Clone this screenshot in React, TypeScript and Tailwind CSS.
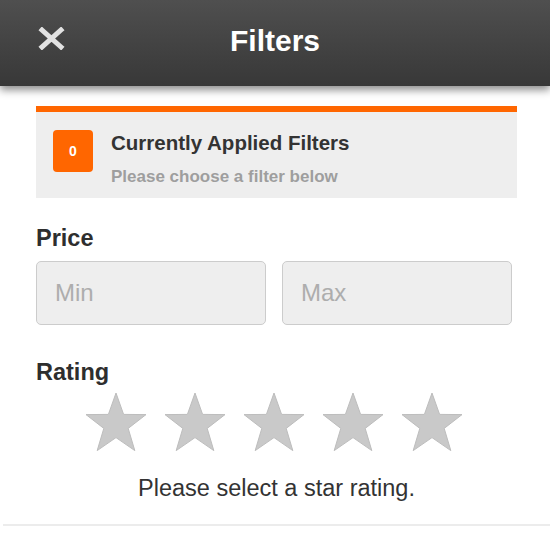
import { useState } from "react";

function Star( { active } : { active: boolean } ) {
   return (
      <svg width="62" height="60" viewBox="0 0 62 60">
         <path
            d="M31 1 L38.6 22.4 L61 22.6 L43.2 36.4 L49.8 58.6 L31 45.6 L12.2 58.6 L18.8 36.4 L1 22.6 L23.4 22.4 Z"
            fill={active ? "#ff6600" : "#c9c9c9"}
            stroke="#bdbdbd"
            strokeWidth="1"
            strokeLinejoin="round"
         />
      </svg>
   );
}

export default function App() {
   const [rating, setRating] = useState( 0 );

   return (
      <div className="w-[550px] h-[550px] bg-white overflow-hidden font-['Liberation_Sans',Arial,sans-serif]">
         <header className="relative h-[86px] flex items-center justify-center bg-gradient-to-b from-[#4f4f4f] to-[#383838] shadow-[0_4px_8px_rgba(0,0,0,0.45)]">
            <button className="absolute left-[38px] top-[27px]">
               <svg width="27" height="23" viewBox="0 0 27 23">
                  <path d="M4 3 L23 20 M23 3 L4 20" stroke="#e2e2e2" strokeWidth="5" strokeLinecap="square" />
               </svg>
            </button>
            <h1 className="text-white text-[30px] font-bold -mt-[6px]">Filters</h1>
         </header>

         <div className="pl-[36px] pr-[33px] pt-[20px]">
            <div className="border-t-[6px] border-[#ff6600] bg-[#eeeeee] h-[92px] flex items-start pl-[17px] pt-[18px]">
               <div className="w-[40px] h-[42px] rounded-[4px] bg-[#ff6600] flex items-center justify-center text-white text-[14px] font-bold">
                  0
               </div>
               <div className="ml-[18px] -mt-[1px]">
                  <div className="text-[20.5px] font-bold text-[#333333] leading-[28px]">Currently Applied Filters</div>
                  <div className="text-[17px] font-bold text-[#9e9e9e] leading-[20px] mt-[10px]">Please choose a filter below</div>
               </div>
            </div>

            <h2 className="mt-[26px] text-[23.5px] font-bold text-[#2e2e2e] leading-[28px]">Price</h2>
            <div className="mt-[9px] flex gap-[16px] pr-[4px]">
               <input
                  placeholder="Min"
                  className="w-[230px] h-[64px] rounded-[5px] border border-[#cccccc] bg-[#eeeeee] px-[18px] text-[24px] text-[#333] placeholder:text-[#adadad] outline-none"
               />
               <input
                  placeholder="Max"
                  className="w-[230px] h-[64px] rounded-[5px] border border-[#cccccc] bg-[#eeeeee] px-[18px] text-[24px] text-[#333] placeholder:text-[#adadad] outline-none"
               />
            </div>

            <h2 className="mt-[33px] text-[23.5px] font-bold text-[#2e2e2e] leading-[28px]">Rating</h2>
            <div className="mt-[6px] flex justify-center gap-[17px] pr-[6px]">
               {[1, 2, 3, 4, 5].map( n => (
                  <button key={n} onClick={() => setRating( n )}>
                     <Star active={n <= rating} />
                  </button>
               ))}
            </div>
            <p className="mt-[22px] text-center text-[23.5px] text-[#333333] leading-[28px]">
               {rating ? `${rating} star rating selected.` : "Please select a star rating."}
            </p>
         </div>
         <div className="mt-[22px] ml-[3px] h-[2px] bg-[#ececec]" />
      </div>
   );
}
